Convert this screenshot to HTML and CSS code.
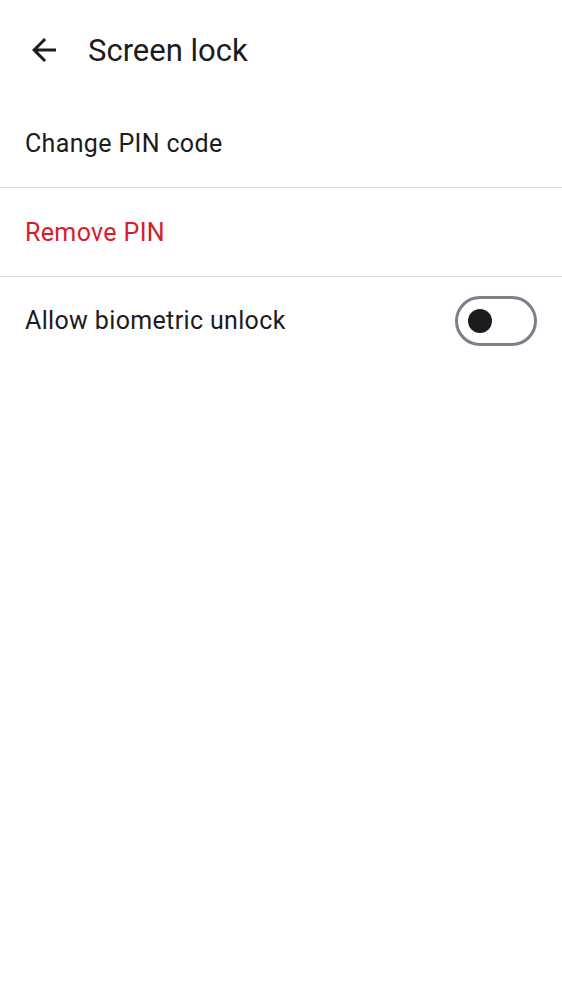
FILE: index.html
```html
<!DOCTYPE html>
<html>
<head>
<meta charset="utf-8">
<link rel="stylesheet" href="styles.css">
</head>
<body>
<div class="app">
  <header class="topbar">
    <span class="back">
      <svg width="36" height="36" viewBox="0 0 24 24"><path d="M20 11H7.83l5.59-5.59L12 4l-8 8 8 8 1.41-1.41L7.83 13H20v-2z" fill="#1d1b20"/></svg>
    </span>
    <h1 class="title">Screen lock</h1>
  </header>
  <div class="item">Change PIN code</div>
  <div class="divider"></div>
  <div class="item danger">Remove PIN</div>
  <div class="divider"></div>
  <div class="item row">
    <span>Allow biometric unlock</span>
    <span class="switch"><span class="knob"></span></span>
  </div>
</div>
</body>
</html>
```

FILE: styles.css
```css
html, body {
  margin: 0;
  padding: 0;
  background: #ffffff;
}
.app {
  font-family: Roboto, "Noto Sans", sans-serif;
  color: #1d1b20;
}
.topbar {
  height: 100px;
  display: flex;
  align-items: center;
  padding-left: 26px;
}
.back {
  width: 36px;
  height: 36px;
  display: flex;
  margin-right: 26px;
}
.title {
  margin: 0;
  font-size: 31px;
  font-weight: 400;
  letter-spacing: 0;
}
.item {
  height: 87px;
  display: flex;
  align-items: center;
  padding: 0 25px;
  font-size: 25px;
  letter-spacing: 0.35px;
}
.item.danger {
  color: #d71c2c;
  height: 88px;
}
.row {
  justify-content: space-between;
}
.divider {
  height: 1px;
  background: #dcdfe3;
}
.switch {
  box-sizing: border-box;
  width: 82px;
  height: 50px;
  border: 3px solid #79808a;
  border-radius: 25px;
  display: flex;
  align-items: center;
  padding-left: 10px;
}
.knob {
  width: 24px;
  height: 24px;
  border-radius: 50%;
  background: #1d1b20;
}
```
